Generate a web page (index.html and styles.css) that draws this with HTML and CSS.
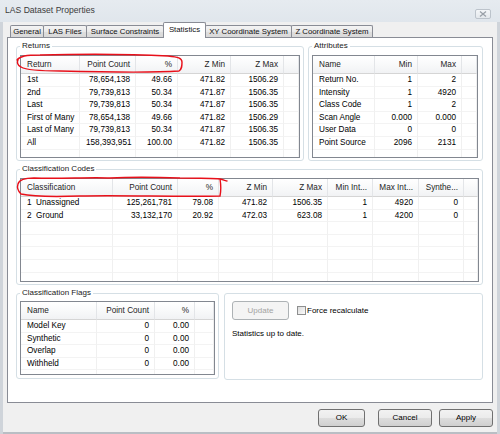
FILE: index.html
```html
<!DOCTYPE html>
<html>
<head>
<meta charset="utf-8">
<title>LAS Dataset Properties</title>
<link rel="stylesheet" href="styles.css">
</head>
<body>
<div class="window">
  <div class="titlebar">
    <span class="title">LAS Dataset Properties</span>
    <span class="close"><svg width="8" height="6" viewBox="0 0 8 6"><path d="M1 0.5 L7 5.5 M7 0.5 L1 5.5" stroke="#9aa0a8" stroke-width="1.3" fill="none"/></svg></span>
  </div>
  <div class="tabs">
    <div class="tab w-general">General</div>
    <div class="tab w-las">LAS Files</div>
    <div class="tab w-surface">Surface Constraints</div>
    <div class="tab w-stats active">Statistics</div>
    <div class="tab w-xy">XY Coordinate System</div>
    <div class="tab w-z">Z Coordinate System</div>
  </div>
  <div class="panel">
    <div class="row-top">
      <fieldset class="group g-returns">
        <legend>Returns</legend>
        <div class="lv lv-returns">
          <div class="h">Return</div><div class="h r">Point Count</div><div class="h r">%</div><div class="h r">Z Min</div><div class="h r">Z Max</div><div class="h"></div>
          <div class="c">1st</div><div class="c r">78,654,138</div><div class="c r">49.66</div><div class="c r">471.82</div><div class="c r">1506.29</div><div class="c"></div>
          <div class="c">2nd</div><div class="c r">79,739,813</div><div class="c r">50.34</div><div class="c r">471.87</div><div class="c r">1506.35</div><div class="c"></div>
          <div class="c">Last</div><div class="c r">79,739,813</div><div class="c r">50.34</div><div class="c r">471.87</div><div class="c r">1506.35</div><div class="c"></div>
          <div class="c">First of Many</div><div class="c r">78,654,138</div><div class="c r">49.66</div><div class="c r">471.82</div><div class="c r">1506.29</div><div class="c"></div>
          <div class="c">Last of Many</div><div class="c r">79,739,813</div><div class="c r">50.34</div><div class="c r">471.87</div><div class="c r">1506.35</div><div class="c"></div>
          <div class="c">All</div><div class="c r">158,393,951</div><div class="c r">100.00</div><div class="c r">471.82</div><div class="c r">1506.35</div><div class="c"></div>
          <div class="c"></div><div class="c"></div><div class="c"></div><div class="c"></div><div class="c"></div><div class="c"></div>
        </div>
      </fieldset>
      <fieldset class="group g-attr">
        <legend>Attributes</legend>
        <div class="lv lv-attr">
          <div class="h">Name</div><div class="h r">Min</div><div class="h r">Max</div><div class="h"></div>
          <div class="c">Return No.</div><div class="c r">1</div><div class="c r">2</div><div class="c"></div>
          <div class="c">Intensity</div><div class="c r">1</div><div class="c r">4920</div><div class="c"></div>
          <div class="c">Class Code</div><div class="c r">1</div><div class="c r">2</div><div class="c"></div>
          <div class="c">Scan Angle</div><div class="c r">0.000</div><div class="c r">0.000</div><div class="c"></div>
          <div class="c">User Data</div><div class="c r">0</div><div class="c r">0</div><div class="c"></div>
          <div class="c">Point Source</div><div class="c r">2096</div><div class="c r">2131</div><div class="c"></div>
          <div class="c"></div><div class="c"></div><div class="c"></div><div class="c"></div>
        </div>
      </fieldset>
    </div>
    <fieldset class="group g-class">
      <legend>Classification Codes</legend>
      <div class="lv lv-class">
        <div class="h">Classification</div><div class="h r">Point Count</div><div class="h r">%</div><div class="h r">Z Min</div><div class="h r">Z Max</div><div class="h r">Min Int...</div><div class="h r">Max Int...</div><div class="h r">Synthe...</div><div class="h"></div>
        <div class="c">1&nbsp; Unassigned</div><div class="c r">125,261,781</div><div class="c r">79.08</div><div class="c r">471.82</div><div class="c r">1506.35</div><div class="c r">1</div><div class="c r">4920</div><div class="c r">0</div><div class="c"></div>
        <div class="c">2&nbsp; Ground</div><div class="c r">33,132,170</div><div class="c r">20.92</div><div class="c r">472.03</div><div class="c r">623.08</div><div class="c r">1</div><div class="c r">4200</div><div class="c r">0</div><div class="c"></div>
        <div class="c"></div><div class="c"></div><div class="c"></div><div class="c"></div><div class="c"></div><div class="c"></div><div class="c"></div><div class="c"></div><div class="c"></div>
        <div class="c"></div><div class="c"></div><div class="c"></div><div class="c"></div><div class="c"></div><div class="c"></div><div class="c"></div><div class="c"></div><div class="c"></div>
        <div class="c"></div><div class="c"></div><div class="c"></div><div class="c"></div><div class="c"></div><div class="c"></div><div class="c"></div><div class="c"></div><div class="c"></div>
        <div class="c"></div><div class="c"></div><div class="c"></div><div class="c"></div><div class="c"></div><div class="c"></div><div class="c"></div><div class="c"></div><div class="c"></div>
        <div class="c"></div><div class="c"></div><div class="c"></div><div class="c"></div><div class="c"></div><div class="c"></div><div class="c"></div><div class="c"></div><div class="c"></div>
      </div>
    </fieldset>
    <div class="row-bottom">
      <fieldset class="group g-flags">
        <legend>Classification Flags</legend>
        <div class="lv lv-flags">
          <div class="h">Name</div><div class="h r">Point Count</div><div class="h r">%</div><div class="h"></div>
          <div class="c">Model Key</div><div class="c r">0</div><div class="c r">0.00</div><div class="c"></div>
          <div class="c">Synthetic</div><div class="c r">0</div><div class="c r">0.00</div><div class="c"></div>
          <div class="c">Overlap</div><div class="c r">0</div><div class="c r">0.00</div><div class="c"></div>
          <div class="c">Withheld</div><div class="c r">0</div><div class="c r">0.00</div><div class="c"></div>
          <div class="c"></div><div class="c"></div><div class="c"></div><div class="c"></div>
        </div>
      </fieldset>
      <div class="g-update">
        <div class="update-row">
          <div class="btn disabled w-update">Update</div>
          <span class="check"></span><span class="check-label">Force recalculate</span>
        </div>
        <div class="status">Statistics up to date.</div>
      </div>
    </div>
  </div>
  <div class="buttons">
    <div class="btn w-ok">OK</div>
    <div class="btn w-cancel">Cancel</div>
    <div class="btn w-apply">Apply</div>
  </div>
  <svg class="annot" width="500" height="434" viewBox="0 0 500 434">
    <path d="M17 60 C 20 56, 26 55, 40 55 C 80 54, 130 54, 168 56 C 178 57, 182 58, 182 62 C 182 66, 182 69, 179 71 C 150 73, 100 72, 60 71 C 40 71, 26 70, 21 67 C 17 65, 17 62, 18 60" fill="none" stroke="#e8101a" stroke-width="1.4" stroke-linecap="round"/>
    <path d="M18 184 C 19 180, 24 178, 34 178 C 60 179, 90 177, 110 178 C 130 177, 150 177, 180 178 C 200 178, 212 178, 220 179 C 224 180, 226 181, 227 181 M220 179 C 221 185, 221 191, 220 196 C 180 197, 120 195, 80 196 C 50 197, 30 196, 21 194 C 18 191, 17 187, 18 184" fill="none" stroke="#e8101a" stroke-width="1.4" stroke-linecap="round"/>
  </svg>
</div>
</body>
</html>
```

FILE: styles.css
```css
* { box-sizing: border-box; }

html, body {
  margin: 0;
  padding: 0;
  background: #f0f0f0;
}

body {
  font-family: "Liberation Sans", Arial, sans-serif;
  font-size: 8px;
  color: #000;
}

.window {
  position: relative;
  width: 500px;
  height: 434px;
  background: #f0f0f0;
  box-shadow: inset 3px 0 0 #cfd4da, inset -3px 0 0 #cfd4da, inset 0 -2px 0 #b9bec4;
  overflow: hidden;
}

/* title bar */
.titlebar {
  height: 22px;
  display: flex;
  align-items: flex-start;
  justify-content: space-between;
  padding: 5px 9px 0 5px;
  background: linear-gradient(#e6ebf0, #e0e6ec);
}

.title {
  font-size: 8.6px;
  line-height: 10px;
  color: #3c3c3c;
}

.close {
  width: 16px;
  height: 10px;
  margin-top: 4px;
  border: 1px solid #bcc3cb;
  border-radius: 2px;
  background: linear-gradient(#f4f6f8, #e4e8ec);
  display: flex;
  align-items: center;
  justify-content: center;
}

/* tabs */
.tabs {
  height: 15px;
  display: flex;
  align-items: flex-end;
  padding-left: 10px;
}

.tab {
  height: 12px;
  border: 1px solid #898c95;
  border-bottom: none;
  border-radius: 2px 2px 0 0;
  margin-right: -1px;
  background: linear-gradient(#f4f4f4, #e9e9e9 50%, #dedede 51%, #d9d9d9);
  font-size: 7.8px;
  line-height: 11px;
  text-align: center;
  color: #111;
  white-space: nowrap;
}

.tab.active {
  height: 16px;
  margin-bottom: -1px;
  background: #fff;
  position: relative;
  z-index: 1;
  line-height: 13px;
}

.w-general { width: 34px; }
.w-las { width: 44px; }
.w-surface { width: 78px; }
.w-stats { width: 43px; }
.w-xy { width: 87px; }
.w-z { width: 82px; }

/* panel */
.panel {
  margin-left: 7px;
  width: 486px;
  height: 366px;
  border: 1px solid #898c95;
  background: #fff;
  padding: 3px 8px 0 8px;
}

.row-top {
  display: flex;
  gap: 4px;
}

.group {
  margin: 0;
  border: 1px solid #d5dfe5;
  border-radius: 3px;
  min-width: 0;
}

.group legend {
  padding: 0 2px;
  font-size: 8px;
  line-height: 10px;
  color: #1a1a1a;
}

.g-returns { width: 288px; padding: 4px 3px 2px 3px; }
.g-attr { width: 175px; padding: 4px 4px 2px 3px; }
.g-class { width: 467px; margin-top: 3px; padding: 4px 3px 2px 3px; }
.g-flags { width: 203px; padding: 3px 3px 3px 3px; }

.row-bottom {
  display: flex;
  gap: 5px;
  align-items: flex-start;
  margin-top: 3px;
}

/* list views */
.lv {
  border: 1px solid #828790;
  overflow: hidden;
  display: grid;
  grid-template-rows: 18px;
  grid-auto-rows: 12.6px;
  align-content: start;
  background: #fff;
}

.lv-returns { height: 103px; grid-template-columns: 59px 56px 42px 53px 53px 1fr; }
.lv-attr { height: 103px; grid-template-columns: 62px 43px 44px 1fr; }
.lv-class { height: 104px; grid-template-columns: 92px 65px 41px 54px 55px 45px 46px 45px 1fr; }
.lv-flags { height: 74px; grid-template-columns: 76px 58px 40px 1fr; }

.lv .h {
  background: linear-gradient(#ffffff, #f7f8f9 60%, #f1f2f4);
  border-right: 1px solid #e3e5e8;
  border-bottom: 1px solid #d5d5d5;
  line-height: 17px;
  padding: 0 5px 0 6px;
  color: #1e1e1e;
  white-space: nowrap;
  overflow: hidden;
  font-size: 8.2px;
}

.lv .c {
  border-right: 1px solid #f0f0f0;
  border-bottom: 1px solid #f3f3f3;
  line-height: 12px;
  padding: 0 5px 0 6px;
  white-space: nowrap;
  overflow: hidden;
  font-size: 8.2px;
}

.lv .r { text-align: right; }

/* update box */
.g-update {
  width: 259px;
  height: 87px;
  margin-top: 5px;
  border: 1px solid #d5dfe5;
  border-radius: 3px;
  padding: 7px 7px;
}

.update-row {
  display: flex;
  align-items: center;
}

.btn {
  height: 18px;
  border: 1px solid #707070;
  border-radius: 3px;
  background: linear-gradient(#f2f2f2, #ebebeb 50%, #dddddd 51%, #cfcfcf);
  text-align: center;
  line-height: 16px;
  font-size: 8px;
  color: #000;
}

.btn.disabled {
  border-color: #adb2b5;
  background: #f4f4f4;
  color: #a3a3a3;
}

.w-update { width: 57px; height: 19px; line-height: 17px; }

.check {
  width: 9px;
  height: 9px;
  margin-left: 8px;
  border: 1px solid #8e8f8f;
  background: linear-gradient(135deg, #dcdcdc, #fbfbfb);
}

.check-label {
  margin-left: 1px;
  font-size: 8px;
  line-height: 10px;
}

.status {
  margin-top: 9px;
  font-size: 8px;
  line-height: 10px;
}

/* dialog buttons */
.buttons {
  display: flex;
  justify-content: flex-end;
  padding-right: 7px;
  margin-top: 6px;
}

.w-ok { width: 47px; margin-right: 13px; }
.w-cancel { width: 54px; margin-right: 7px; }
.w-apply { width: 54px; }

/* annotation overlay */
.annot {
  position: absolute;
  left: 0;
  top: 0;
  pointer-events: none;
}
```
